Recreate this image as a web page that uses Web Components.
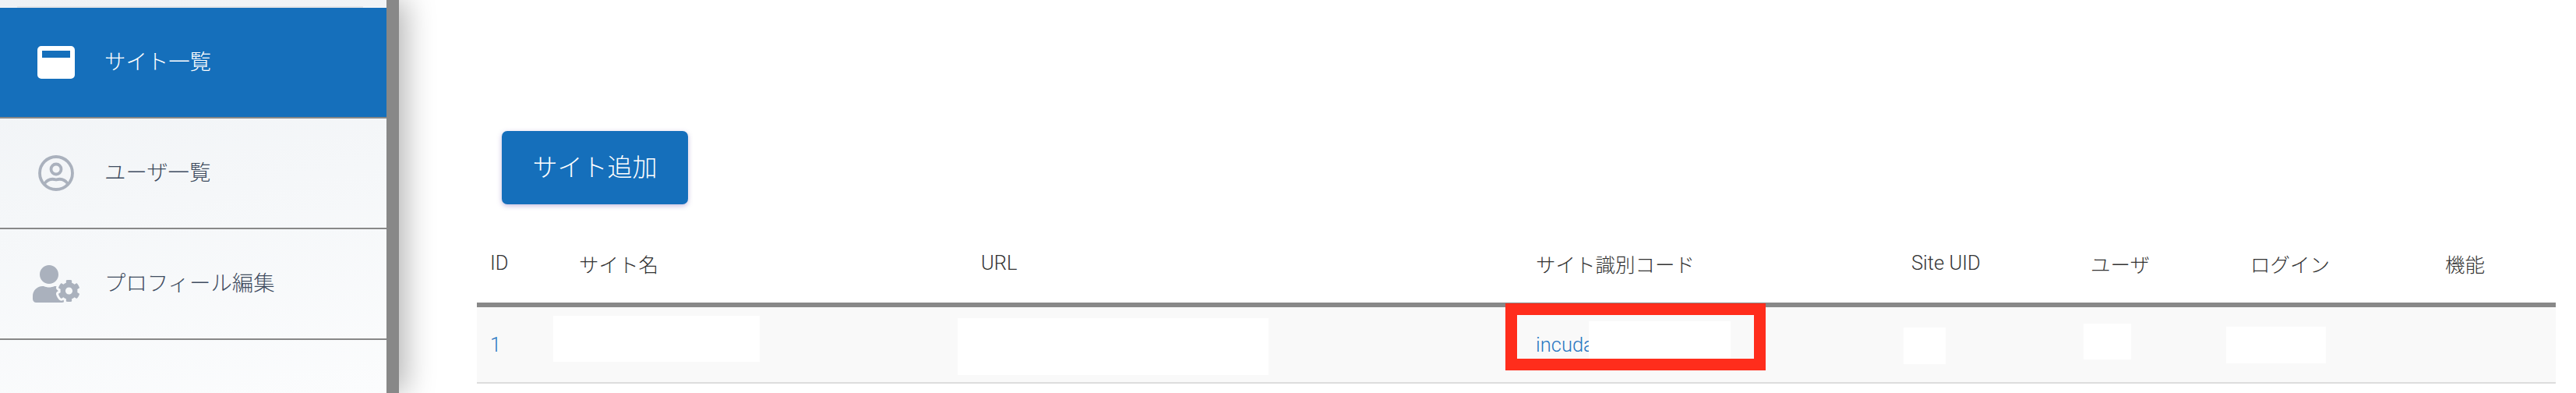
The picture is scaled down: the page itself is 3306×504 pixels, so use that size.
<!DOCTYPE html>
<html lang="ja">
<head>
<meta charset="utf-8">
<title>サイト一覧</title>
<style>
  html, body { margin: 0; height: 504px; overflow: hidden; background: #fff; }
  body { display: flex; font-family: Roboto, "Noto Sans CJK JP", sans-serif; font-weight: 300; }
</style>
</head>
<body>
<app-sidebar>
  <nav-item active label="サイト一覧">
    <svg slot="icon" width="48" height="42" viewBox="0 0 48 42"><path fill="#fff" fill-rule="evenodd" d="M5 0h38a5 5 0 0 1 5 5v32a5 5 0 0 1-5 5H5a5 5 0 0 1-5-5V5a5 5 0 0 1 5-5zM6 6v9h36V6z"/></svg>
  </nav-item>
  <nav-item label="ユーザ一覧">
    <svg slot="icon" width="46" height="46" viewBox="0 0 46 46" fill="none" stroke="#aab1bd" stroke-width="3.8"><circle cx="23" cy="23" r="21"/><circle cx="23" cy="18" r="6.5"/><path d="M8 36.500C12 31 18 30 23 31.500 28 30 34 31 38 36.500"/></svg>
  </nav-item>
  <nav-item label="プロフィール編集">
    <svg slot="icon" width="60" height="48" viewBox="0 0 640 512"><path fill="#aab1bd" d="M610.500 373.300c2.600-14.100 2.600-28.500 0-42.600l25.800-14.900c3-1.700 4.300-5.200 3.300-8.500-6.700-21.600-18.200-41.200-33.200-57.400-2.300-2.500-6-3.100-9-1.400l-25.800 14.900c-10.900-9.300-23.400-16.500-36.900-21.300v-29.800c0-3.400-2.400-6.400-5.700-7.100-22.300-5-45-4.800-66.200 0-3.300.7-5.700 3.700-5.700 7.100v29.800c-13.500 4.800-26 12-36.900 21.300l-25.800-14.900c-2.900-1.700-6.700-1.100-9 1.400-15 16.200-26.500 35.800-33.200 57.400-1 3.300.4 6.800 3.300 8.500l25.800 14.900c-2.600 14.100-2.600 28.500 0 42.600l-25.800 14.900c-3 1.700-4.300 5.200-3.300 8.500 6.700 21.600 18.200 41.100 33.200 57.400 2.300 2.500 6 3.100 9 1.400l25.800-14.900c10.900 9.300 23.400 16.500 36.900 21.300v29.800c0 3.400 2.400 6.400 5.700 7.100 22.300 5 45 4.800 66.200 0 3.300-.7 5.700-3.700 5.700-7.100v-29.800c13.500-4.800 26-12 36.900-21.300l25.800 14.900c2.900 1.700 6.700 1.100 9-1.400 15-16.200 26.500-35.800 33.200-57.400 1-3.300-.4-6.800-3.300-8.500l-25.800-14.900zM496 400.500c-26.800 0-48.500-21.800-48.500-48.500s21.800-48.500 48.500-48.500 48.500 21.800 48.500 48.500-21.700 48.500-48.500 48.500zM224 256c70.700 0 128-57.300 128-128S294.700 0 224 0 96 57.300 96 128s57.300 128 128 128zm201.200 226.500c-2.300-1.200-4.600-2.600-6.800-3.900l-7.900 4.600c-6 3.400-12.800 5.300-19.600 5.300-10.900 0-21.400-4.600-28.900-12.600-18.300-19.800-32.300-43.900-40.200-69.600-5.500-17.700 1.900-36.400 17.900-45.700l7.900-4.600c-.1-2.600-.1-5.200 0-7.800l-7.900-4.600c-16-9.200-23.400-28-17.900-45.700.9-2.900 2.200-5.800 3.200-8.700-3.800-.3-7.500-1.200-11.400-1.200h-16.700c-22.200 10.200-46.900 16-72.900 16s-50.600-5.800-72.900-16h-16.700C60.200 288 0 348.200 0 422.400V464c0 26.500 21.500 48 48 48h352c10.100 0 19.500-3.200 27.200-8.500-1.200-3.800-2-7.700-2-11.800v-9.200z"/></svg>
  </nav-item>
</app-sidebar>
<site-page>
  <add-button>サイト追加</add-button>
  <site-table></site-table>
</site-page>
<script>
class AppSidebar extends HTMLElement {
  constructor() {
    super();
    const shadow = this.attachShadow({ mode: 'open' });
    shadow.innerHTML = `
      <style>
        :host {
          display: block;
          flex: none;
          width: 496px;
          height: 504px;
          border-right: 16px solid #888;
          background: linear-gradient(170deg, #eff2f5, #fbfcfd);
          box-shadow: 8px 0 36px rgba(0,0,0,0.3);
          overflow: hidden;
          position: relative;
          z-index: 1;
        }
        .top {
          height: 8px;
          margin: 0 30px 0 22px;
          border-bottom: 2px solid #e3e5e8;
        }
      </style>
      <div class="top"></div>
      <slot></slot>
    `;
  }
}

class NavItem extends HTMLElement {
  constructor() {
    super();
    const shadow = this.attachShadow({ mode: 'open' });
    shadow.innerHTML = `
      <style>
        :host {
          display: flex;
          align-items: center;
          height: 140px;
          border-bottom: 2px solid #888;
          color: #3f4c60;
          font-size: 27.4px;
        }
        :host([active]) {
          background: #156fbb;
          color: #fff;
        }
        .icon {
          flex: none;
          width: 72px;
          margin: 0 26px 0 36px;
          display: flex;
          justify-content: center;
        }
        .label { margin-bottom: 6px; }
      </style>
      <div class="icon"><slot name="icon"></slot></div>
      <span class="label"></span>
    `;
    shadow.querySelector('.label').textContent = this.getAttribute('label');
  }
}

class SitePage extends HTMLElement {
  constructor() {
    super();
    const shadow = this.attachShadow({ mode: 'open' });
    shadow.innerHTML = `
      <style>
        :host {
          display: block;
          flex: 1;
          padding: 168px 26px 0 100px;
          min-width: 0;
        }
      </style>
      <slot></slot>
    `;
  }
}

class AddButton extends HTMLElement {
  constructor() {
    super();
    const shadow = this.attachShadow({ mode: 'open' });
    shadow.innerHTML = `
      <style>
        :host {
          display: flex;
          box-sizing: border-box;
          width: 239px;
          height: 94px;
          padding-bottom: 6px;
          margin-left: 32px;
          align-items: center;
          justify-content: center;
          background: #156fbb;
          border-radius: 7px;
          color: #fff;
          font-size: 32px;
          box-shadow: 0 2px 6px rgba(90,60,160,0.35);
        }
      </style>
      <slot></slot>
    `;
  }
}

class SiteTable extends HTMLElement {
  constructor() {
    super();
    const shadow = this.attachShadow({ mode: 'open' });
    const heads = ['ID', 'サイト名', 'URL', 'サイト識別コード', 'Site UID', 'ユーザ', 'ログイン', '機能'];
    shadow.innerHTML = `
      <style>
        :host {
          display: block;
          margin-top: 28px;
          font-size: 25.5px;
        }
        .grid {
          display: grid;
          grid-template-columns: 114px 516px 712px 482px 230px 205px 250px 1fr;
        }
        .head {
          height: 94px;
          padding-bottom: 4px;
          border-bottom: 6px solid #888;
          color: #333;
        }
        .row {
          height: 96px;
          background: #f9f9f9;
          border-bottom: 2px solid #ddd;
          color: #2a78c2;
          position: relative;
        }
        .grid > div {
          padding-left: 17px;
          display: flex;
          align-items: center;
          white-space: nowrap;
        }
        .row .mask { position: absolute; background: #fff; padding: 0; }
        .row .mark {
          position: absolute;
          box-sizing: border-box;
          left: 1320px;
          top: -5px;
          width: 334px;
          height: 86px;
          border: solid #ff2d1c;
          border-width: 15px;
          padding: 0;
        }
      </style>
      <div class="grid head">${heads.map(h => `<div>${h}</div>`).join('')}</div>
      <div class="grid row">
        <div>1</div><div></div><div></div><div>incuda</div><div></div><div></div><div></div><div></div>
        <div class="mask" style="left:98px;top:11px;width:265px;height:59px"></div>
        <div class="mask" style="left:617px;top:14px;width:399px;height:73px"></div>
        <div class="mask" style="left:1427px;top:18px;width:182px;height:48px"></div>
        <div class="mask" style="left:1831px;top:26px;width:54px;height:47px"></div>
        <div class="mask" style="left:2062px;top:21px;width:61px;height:46px"></div>
        <div class="mask" style="left:2245px;top:25px;width:128px;height:47px"></div>
        <div class="mark"></div>
      </div>
    `;
  }
}

customElements.define('app-sidebar', AppSidebar);
customElements.define('nav-item', NavItem);
customElements.define('site-page', SitePage);
customElements.define('add-button', AddButton);
customElements.define('site-table', SiteTable);
</script>
</body>
</html>
